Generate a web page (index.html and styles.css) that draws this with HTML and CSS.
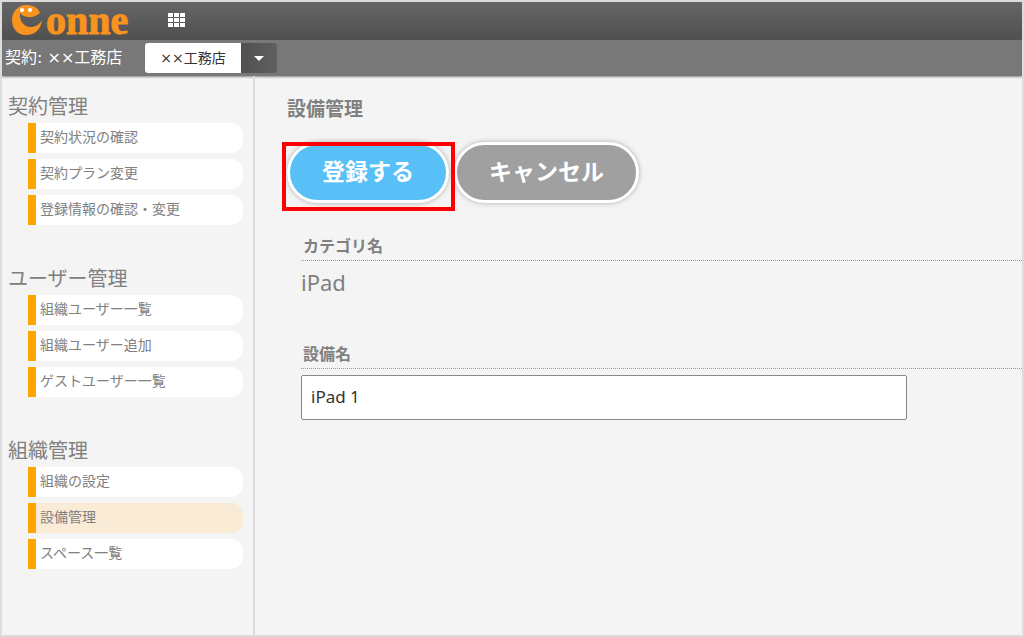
FILE: index.html
```html
<!DOCTYPE html>
<html lang="ja">
<head>
    <meta charset="UTF-8">
    <meta name="viewport" content="width=device-width, initial-scale=1.0">
    <title>設備管理 - Conne</title>
<link rel="stylesheet" href="styles.css">
</head>
<body>
    <header class="header">
        <a class="logo" href="#" aria-label="Conne">
            <svg class="logo-face" viewBox="0 0 32 32">
                <path fill="#f7931e" d="M30 9C28 3 22 1 16 1 8 1 2 8 2 16c0 9 6 15 14 15 9 0 15-6 16-15-3 5-7 7-11 7-7 0-12-6-11-14 4 5 13 6 20 0z"/>
                <circle cx="12" cy="6" r="2.1" fill="#fff"/>
                <circle cx="20" cy="6" r="2.1" fill="#fff"/>
            </svg>
            <span class="logo-text">onne</span>
        </a>
        <button class="apps" type="button" aria-label="アプリ">
            <svg viewBox="0 0 18 14" width="18" height="14" fill="#fff">
                <path d="M0 0h5v4H0zM6 0h5v4H6zM12 0h5v4h-5zM0 5h5v4H0zM6 5h5v4H6zM12 5h5v4h-5zM0 10h5v4H0zM6 10h5v4H6zM12 10h5v4h-5z"/>
            </svg>
        </button>
    </header>
    <div class="contract">
        <span class="contract-name">契約: ××工務店</span>
        <div class="switch">
            <button class="switch-name" type="button">××工務店</button>
            <button class="switch-caret" type="button" aria-label="契約を選択">
                <svg viewBox="0 0 10 5" width="10" height="5"><path d="M0 0h10L5 5z" fill="#fff"/></svg>
            </button>
        </div>
    </div>
    <div class="page">
        <nav class="side">
            <h2>契約管理</h2>
            <ul>
                <li><a href="#">契約状況の確認</a></li>
                <li><a href="#">契約プラン変更</a></li>
                <li><a href="#">登録情報の確認・変更</a></li>
            </ul>
            <h2>ユーザー管理</h2>
            <ul>
                <li><a href="#">組織ユーザー一覧</a></li>
                <li><a href="#">組織ユーザー追加</a></li>
                <li><a href="#">ゲストユーザー一覧</a></li>
            </ul>
            <h2>組織管理</h2>
            <ul>
                <li><a href="#">組織の設定</a></li>
                <li><a class="active" href="#">設備管理</a></li>
                <li><a href="#">スペース一覧</a></li>
            </ul>
        </nav>
        <main class="main">
            <h1>設備管理</h1>
            <form class="form">
                <div class="actions">
                    <div class="marked"><button class="btn save" type="button">登録する</button></div>
                    <button class="btn" type="button">キャンセル</button>
                </div>
                <div class="field">
                    <h3 class="label">カテゴリ名</h3>
                    <p class="value">iPad</p>
                </div>
                <div class="field">
                    <label class="label" for="name">設備名</label>
                    <input class="text" id="name" type="text" value="iPad 1">
                </div>
            </form>
        </main>
    </div>
</body>
</html>
```
FILE: styles.css
```css
*{
    box-sizing: border-box;
    margin: 0px; padding: 0px;
}
body{
    min-height: 100vh;
    display: flex; flex-direction: column;
    border: 2px solid #dcdcdc;
    background: #f4f4f4; color: #808080;
    font-family: "Noto Sans", "Noto Sans CJK JP", sans-serif;
}
button, input{
    font-family: inherit;
}
a{
    color: inherit; text-decoration: none;
}
.header{
    height: 38px;
    display: flex; align-items: center; gap: 40px;
    padding: 0 8px 2px;
    background: linear-gradient(#666, #4f4f4f);
}
.logo{
    display: flex; align-items: center; gap: 4px;
}
.logo-face{
    width: 32px; height: 32px;
}
.logo-text{
    padding-top: 2px;
    color: #f7931e;
    font-family: "Liberation Serif", serif;
    font-size: 40px; font-weight: bold; line-height: 30px;
    -webkit-text-stroke: 1px #f7931e;
}
.apps{
    display: flex;
    border: none; background: none;
}
.contract{
    height: 36px;
    display: flex; align-items: center; gap: 23px;
    padding-left: 3px;
    background: #787878; color: #fff;
    box-shadow: 0 1px 2px #888;
    font-family: "DejaVu Sans", "Noto Sans CJK JP", sans-serif;
}
.contract-name{
    font-size: 16px; line-height: 24px;
}
.switch{
    display: flex;
    height: 30px;
}
.switch-name{
    padding: 0 15px 2px;
    border: none; border-radius: 3px 0 0 3px;
    background: #fff; color: #333;
    font-size: 14px;
}
.switch-caret{
    width: 36px;
    display: flex; align-items: center; justify-content: center;
    border: none; border-radius: 0 3px 3px 0;
    background: linear-gradient(90deg, #505050, #606060);
}
.page{
    flex: 1;
    display: flex;
}
.side{
    width: 253px;
    padding: 16px 10px 0 6px;
    border-right: 2px solid #dcdcdc;
}
.side h2{
    font-size: 20px; font-weight: normal; line-height: 30px;
}
.side ul{
    display: grid; gap: 6px;
    margin: 1px 0 38px;
    padding-left: 20px;
    list-style: none;
}
.side ul + h2{
    padding-top: 1px;
}
.side li a{
    display: block;
    height: 30px;
    padding-left: 4px;
    border-left: 8px solid #ffa500;
    border-radius: 0 12px 12px 0;
    background: #fff;
    font-size: 14px; line-height: 28px;
}
.side li .active{
    background: #faebd7;
}
.main{
    flex: 1;
    padding: 18px 0 0 32px;
}
.main h1{
    font-size: 19px; line-height: 30px;
}
.actions{
    display: flex; gap: 5px;
    margin-top: 18px;
}
.marked{
    position: relative;
}
/* red frame over the save button */
.marked::after{
    content: "";
    position: absolute; top: 0; left: -5px; right: -6px; bottom: -8px;
    border: 4px solid #f00;
    pointer-events: none;
}
.btn{
    height: 61px;
    padding: 0 32px 6px;
    border: 3px solid #fff; border-radius: 31px;
    background: #a0a0a0; color: #fff;
    box-shadow: 0 0 5px #aaa;
    font-size: 23px; font-weight: bold;
}
.save{
    background: #59c0f7;
}
.field{
    height: 79px;
    margin: 29px 0 0 14px;
}
.label{
    display: block;
    padding-left: 2px;
    border-bottom: 1px dotted #999;
    font-size: 16px; font-weight: bold; line-height: 28px;
}
.value{
    font-size: 22px; line-height: 42px;
}
.text{
    width: 84%; height: 45px;
    margin-top: 6px;
    padding: 0 9px 2px;
    border: 1px solid #888; border-radius: 2px;
    background: #fff; color: #333;
    font-size: 17px;
}
```
